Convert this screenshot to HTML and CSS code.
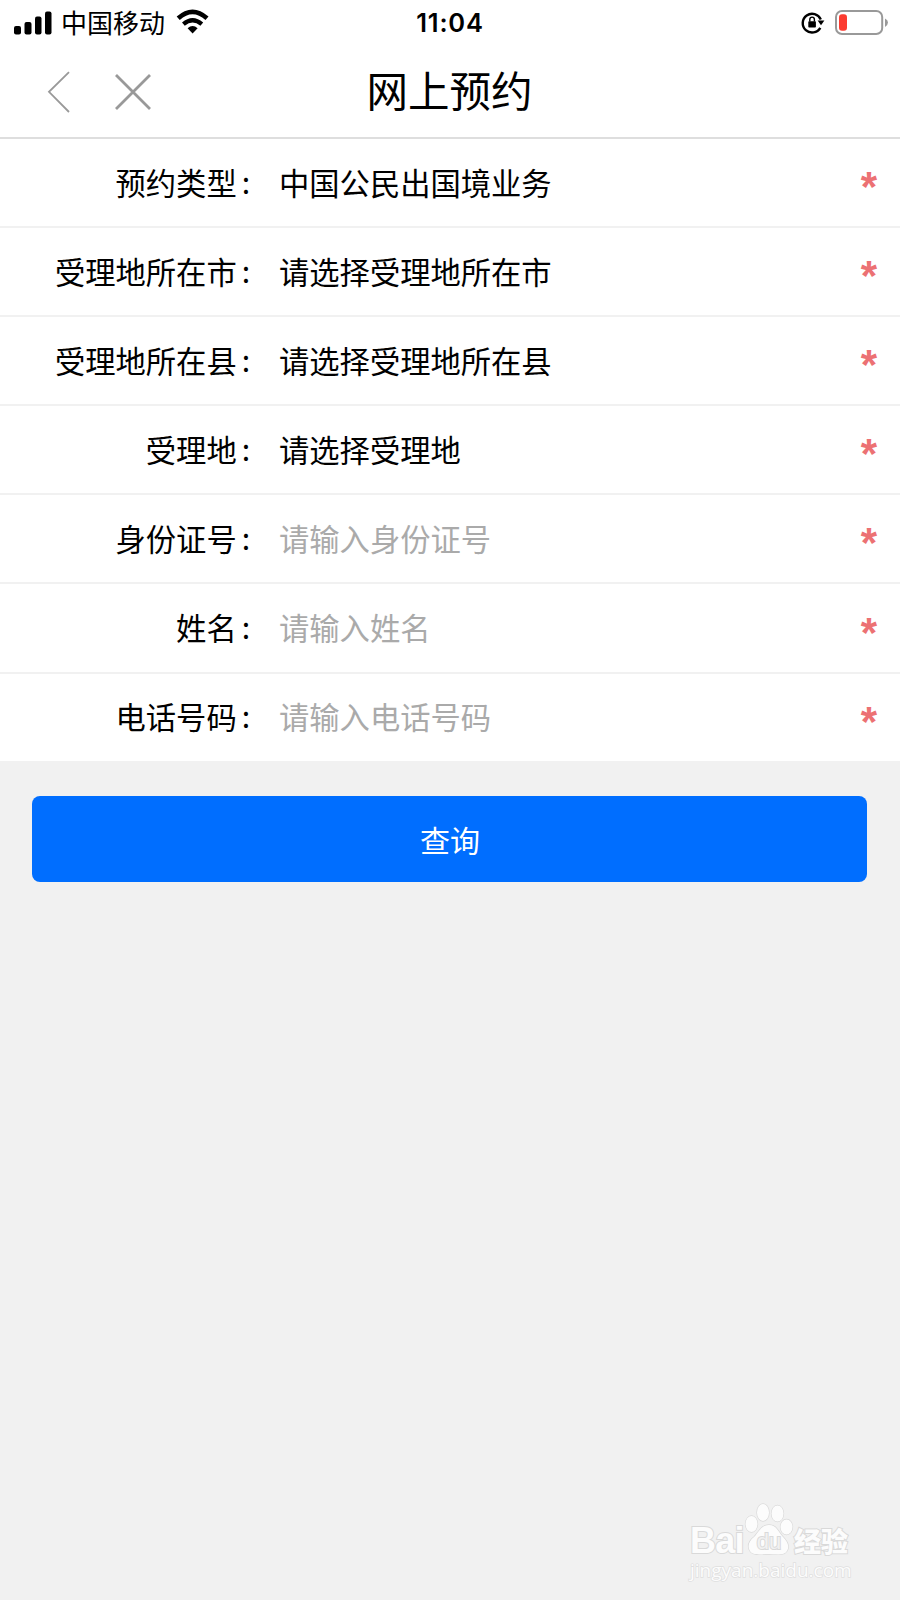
FILE: index.html
```html
<!DOCTYPE html>
<html lang="zh-CN">
<head>
    <meta charset="UTF-8">
    <meta name="viewport" content="width=device-width, initial-scale=1.0">
    <title>网上预约</title>
    <link rel="stylesheet" href="styles.css">
</head>
<body>

<!-- 状态栏 -->
<div class="status-bar">
    <div class="status-left">
        <svg width="38" height="24" viewBox="0 0 38 24">
            <rect x="0" y="15" width="7" height="8.5" rx="2"/>
            <rect x="10.5" y="11" width="7" height="12.5" rx="2"/>
            <rect x="21" y="5.5" width="6.5" height="18" rx="2"/>
            <rect x="31" y="0.5" width="6.5" height="23" rx="2"/>
        </svg>
        <span class="carrier">中国移动</span>
        <svg class="wifi" width="34" height="26" viewBox="0 0 34 26">
            <path d="M2.2 9.2Q16.5-3.6 31 9.2" fill="none" stroke="#000" stroke-width="4.6"/>
            <path d="M7.4 15.2Q16.6 7.2 25.8 15.2" fill="none" stroke="#000" stroke-width="4.2"/>
            <path d="M11.6 19.2Q16.6 14.8 21.6 19.2L16.6 24.4Z"/>
        </svg>
    </div>
    <div class="time">11:04</div>
    <div class="status-right">
        <svg width="24" height="24" viewBox="0 0 24 24">
            <path d="M19.3 16.8A9.4 9.4 0 1 1 19.8 8.5" fill="none" stroke="#000" stroke-width="2.4"/>
            <path d="M16.6 9.6H23.4L20 14.2Z"/>
            <rect x="7.3" y="10.2" width="7.6" height="6.3" rx="0.8"/>
            <path d="M8.8 10.5V8.4a2.3 2.3 0 0 1 4.6 0V10.5" fill="none" stroke="#000" stroke-width="1.4"/>
        </svg>
        <svg width="53" height="26" viewBox="0 0 53 26">
            <rect x="1" y="1" width="46.2" height="23" rx="6" fill="none" stroke="#999" stroke-width="2"/>
            <rect x="4" y="4.3" width="8" height="16.5" rx="3" fill="#fc3b30"/>
            <path d="M50 8.5Q53 10 53 12.6T50 17Z" fill="#999"/>
        </svg>
    </div>
</div>

<!-- 标题栏 -->
<header class="nav-bar">
    <div class="nav-buttons">
        <svg width="24" height="42" viewBox="0 0 24 42">
            <path d="M22 1.2L2 20.8L22 41" fill="none" stroke="#999" stroke-width="1.8"/>
        </svg>
        <svg width="36" height="36" viewBox="0 0 36 36">
            <path d="M1 1L35 35M35 1L1 35" fill="none" stroke="#999" stroke-width="2.8"/>
        </svg>
    </div>
    <h1>网上预约</h1>
</header>

<!-- 预约表单 -->
<div class="form">
    <div class="row">
        <div class="label">预约类型<span class="colon">:</span></div>
        <div class="value">中国公民出国境业务</div>
        <span class="required">*</span>
    </div>
    <div class="row">
        <div class="label">受理地所在市<span class="colon">:</span></div>
        <div class="value">请选择受理地所在市</div>
        <span class="required">*</span>
    </div>
    <div class="row">
        <div class="label">受理地所在县<span class="colon">:</span></div>
        <div class="value">请选择受理地所在县</div>
        <span class="required">*</span>
    </div>
    <div class="row">
        <div class="label">受理地<span class="colon">:</span></div>
        <div class="value">请选择受理地</div>
        <span class="required">*</span>
    </div>
    <div class="row">
        <div class="label">身份证号<span class="colon">:</span></div>
        <input class="value" type="text" placeholder="请输入身份证号">
        <span class="required">*</span>
    </div>
    <div class="row">
        <div class="label">姓名<span class="colon">:</span></div>
        <input class="value" type="text" placeholder="请输入姓名">
        <span class="required">*</span>
    </div>
    <div class="row">
        <div class="label">电话号码<span class="colon">:</span></div>
        <input class="value" type="text" placeholder="请输入电话号码">
        <span class="required">*</span>
    </div>
</div>

<button class="query-btn">查询</button>

<!-- 水印 -->
<div class="watermark">
    <div class="brand">
        <span class="bai">Bai</span>
        <div class="paw">
            <svg width="50" height="54" viewBox="0 0 50 54">
                <ellipse cx="7.5" cy="21" rx="6" ry="8"/>
                <ellipse cx="19" cy="9.5" rx="6" ry="8.5"/>
                <ellipse cx="33.5" cy="10.5" rx="6" ry="8"/>
                <ellipse cx="42.5" cy="24" rx="6" ry="7.5"/>
                <path d="M25 22C17 22 15 29 10 34C5 38 3 43 6 48C9 53 18 51 25 51C32 51 40 53 43 48C46 43 43 38 39 34C34 29 33 22 25 22Z"/>
            </svg>
            <span class="du">du</span>
        </div>
        <span class="jingyan">经验</span>
    </div>
    <div class="site">jingyan.baidu.com</div>
</div>

</body>
</html>
```
FILE: styles.css
```css
* {
    box-sizing: border-box;
}

body {
    font-family: "Noto Sans CJK SC", sans-serif;
    background-color: #f1f1f1;
    color: #000;
    margin: 0;
    min-height: 1600px;
    position: relative;
}

svg {
    display: block;
}

/* 状态栏 */
.status-bar {
    display: grid;
    grid-template-columns: 1fr auto 1fr;
    align-items: center;
    height: 46px;
    padding: 0 12px 0 14px;
    background-color: #fff;
}

.status-left,
.status-right {
    display: flex;
    align-items: center;
}

.status-right {
    justify-content: flex-end;
    gap: 10px;
    padding-bottom: 1px;
}

.carrier {
    font-size: 26px;
    line-height: 44px;
    margin: 0 11px 2px 9px;
}

.wifi {
    margin-top: -2px;
}

.time {
    font-family: Inter, sans-serif;
    font-size: 25.5px;
    font-weight: 600;
    letter-spacing: 0.8px;
    padding: 0 2px 1px 0;
}

/* 标题栏 */
.nav-bar {
    display: grid;
    grid-template-columns: 1fr auto 1fr;
    align-items: center;
    height: 93px;
    background-color: #fff;
    border-bottom: 2px solid #dedede;
}

.nav-buttons {
    display: flex;
    align-items: center;
    gap: 44px;
    padding-left: 47px;
}

.nav-bar h1 {
    font-size: 41.5px;
    font-weight: 400;
    line-height: 60px;
    margin: 0;
    padding: 0 1px 5px 0;
}

/* 预约表单 */
.form {
    background-color: #fff;
}

.row {
    display: flex;
    align-items: center;
    height: 89.1px;
    padding: 0 22px 2px 0;
    font-size: 30.3px;
    border-bottom: 2px solid #f1f1f1;
}

.row:last-child {
    height: 87px;
    border-bottom: none;
}

.label {
    width: 267px;
    text-align: right;
}

.colon {
    display: inline-block;
    width: 30.3px;
    padding-left: 5px;
    text-align: left;
    line-height: 1;
    transform: translateY(-1px);
}

.value {
    flex: 1;
    min-width: 0;
    margin-left: 12px;
    padding: 0;
    border: none;
    outline: none;
    background: none;
    font-family: inherit;
    font-size: inherit;
}

.value::placeholder {
    color: #aaa;
}

.required {
    color: #ec7173;
    font-family: "Liberation Sans", sans-serif;
    font-size: 42px;
    font-weight: bold;
    line-height: 40px;
    padding: 11px 1px 0 0;
}

.query-btn {
    display: block;
    width: 835px;
    height: 86px;
    margin: 35px 0 0 32.4px;
    padding: 0;
    border: none;
    border-radius: 8px;
    background-color: #006eff;
    color: #fff;
    font-family: inherit;
    font-size: 30px;
    cursor: pointer;
}

/* 水印 */
.watermark {
    position: absolute;
    left: 690px;
    top: 1503px;
    color: #fcfcfc;
    font-family: "Liberation Sans", sans-serif;
    -webkit-text-stroke: 2px #d9d9d9;
    paint-order: stroke fill;
}

.brand {
    display: flex;
    align-items: flex-end;
    height: 54px;
    font-weight: bold;
}

.bai {
    width: 54px;
    font-size: 36px;
    line-height: 32px;
    letter-spacing: -0.8px;
}

.paw {
    display: grid;
    width: 50px;
}

.paw svg,
.paw .du {
    grid-area: 1 / 1;
}

.paw svg {
    fill: #fcfcfc;
    stroke: #d9d9d9;
    stroke-width: 1.3;
}

.du {
    align-self: end;
    justify-self: center;
    margin-bottom: 4px;
    font-size: 22px;
    font-weight: normal;
    line-height: 22px;
    color: #f1f1f1;
}

.jingyan {
    font-family: "Noto Sans CJK SC", sans-serif;
    font-size: 27px;
    font-weight: 900;
    line-height: 32px;
}

.site {
    font-family: "Open Sans", sans-serif;
    font-size: 19px;
    line-height: 26px;
    -webkit-text-stroke: 1.5px #dfdfdf;
}
```
